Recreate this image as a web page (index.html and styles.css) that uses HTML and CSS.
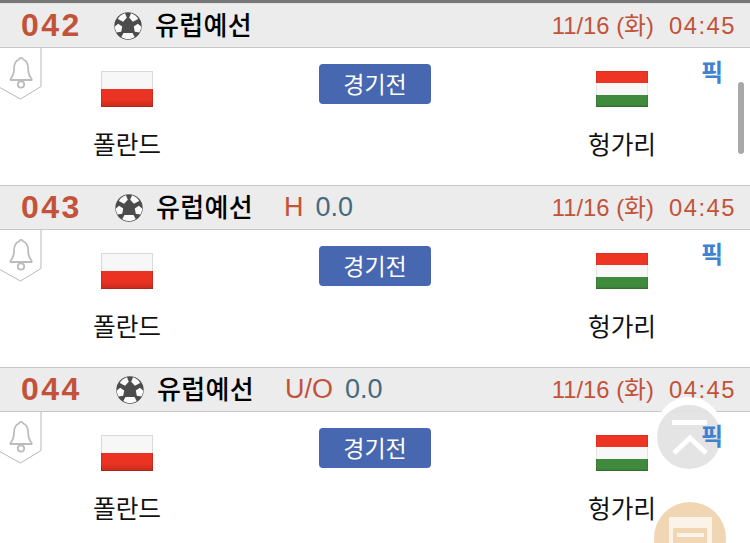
FILE: index.html
```html
<!DOCTYPE html>
<html lang="ko">
<head>
<meta charset="utf-8">
<title>경기 목록</title>
<link rel="stylesheet" href="styles.css">
</head>
<body>
<svg class="defs" width="0" height="0" aria-hidden="true">
  <defs>
    <linearGradient id="shade" x1="0" y1="0" x2="0" y2="1">
      <stop offset="0" stop-color="#000" stop-opacity="0"/>
      <stop offset=".8" stop-color="#000" stop-opacity="0"/>
      <stop offset="1" stop-color="#000" stop-opacity=".16"/>
    </linearGradient>
    <symbol id="ball" viewBox="0 0 28 28">
      <circle cx="14" cy="14" r="13.7" fill="#4c4c4c"/>
      <path d="M3.800 7C5.500 4 8.500 1.800 11 1.300l1.800 4.500-3.700 4z" fill="#fafafa"/>
      <path d="M24.200 7C22.500 4 19.500 1.800 17 1.300l-1.800 4.500 3.700 4z" fill="#fafafa"/>
      <path d="M.8 14.500c0 2.200.9 4.500 1.800 6l4.600-.7 1-5.300-4-2.800z" fill="#fafafa"/>
      <path d="M27.200 14.500c0 2.200-.9 4.500-1.800 6l-4.600-.7-1-5.300 4-2.800z" fill="#fafafa"/>
      <path d="M9.500 21h9l2.200 4c-2 1.400-4.200 2-6.700 2s-4.700-.6-6.700-2z" fill="#fafafa"/>
    </symbol>
    <symbol id="bell" viewBox="0 0 42 53">
      <path d="M-2 -2V38.500L20.500 51L41 38.500V-2" fill="#fff" stroke="#b8b8b8" stroke-width="1"/>
      <path d="M10.500 31c2.500-3 3.500-5.500 3.500-10 0-5 2-8.500 5-9.500a2.200 2.200 0 0 1 4.200 0c3 1 5 4.500 5 9.500 0 4.500 1 7 3.500 10v1H10.500z" fill="none" stroke="#bcbcbc" stroke-width="1.800" stroke-linejoin="round"/>
      <circle cx="21" cy="36.500" r="3.200" fill="none" stroke="#bcbcbc" stroke-width="1.800"/>
    </symbol>
    <symbol id="poland" viewBox="0 0 52 36" preserveAspectRatio="none">
      <rect width="52" height="18" fill="#f7f7f7"/>
      <rect y="18" width="52" height="18" fill="#ea3323"/>
      <rect width="52" height="36" fill="url(#shade)"/>
      <rect x=".5" y=".5" width="51" height="35" fill="none" stroke="#000" stroke-opacity=".12"/>
    </symbol>
    <symbol id="hungary" viewBox="0 0 52 36" preserveAspectRatio="none">
      <rect width="52" height="12" fill="#ee3524"/>
      <rect y="12" width="52" height="12" fill="#f8f8f8"/>
      <rect y="24" width="52" height="12" fill="#3f8a3c"/>
      <rect y="24" width="52" height="12" fill="url(#shade)"/>
      <rect x=".5" y=".5" width="51" height="35" fill="none" stroke="#000" stroke-opacity=".08"/>
    </symbol>
  </defs>
</svg>

<main class="list">
  <section class="match">
    <header class="head">
      <span class="num">042</span>
      <svg class="ball"><use href="#ball"/></svg>
      <span class="league">유럽예선</span>
      <span class="when"><span>11/16 (화)</span><span class="clock">04:45</span></span>
    </header>
    <div class="body">
      <svg class="bell"><use href="#bell"/></svg>
      <div class="team"><svg class="flag"><use href="#poland"/></svg><span class="name">폴란드</span></div>
      <div class="mid"><a class="btn">경기전</a></div>
      <div class="team"><svg class="flag"><use href="#hungary"/></svg><span class="name">헝가리</span></div>
      <span class="pick">픽</span>
    </div>
  </section>

  <section class="match">
    <header class="head">
      <span class="num n43">043</span>
      <svg class="ball"><use href="#ball"/></svg>
      <span class="league">유럽예선</span>
      <span class="odds"><span class="kind">H</span><span class="val">0.0</span></span>
      <span class="when"><span>11/16 (화)</span><span class="clock">04:45</span></span>
    </header>
    <div class="body">
      <svg class="bell"><use href="#bell"/></svg>
      <div class="team"><svg class="flag"><use href="#poland"/></svg><span class="name">폴란드</span></div>
      <div class="mid"><a class="btn">경기전</a></div>
      <div class="team"><svg class="flag"><use href="#hungary"/></svg><span class="name">헝가리</span></div>
      <span class="pick">픽</span>
    </div>
  </section>

  <section class="match">
    <header class="head">
      <span class="num n44">044</span>
      <svg class="ball"><use href="#ball"/></svg>
      <span class="league">유럽예선</span>
      <span class="odds"><span class="kind">U/O</span><span class="val">0.0</span></span>
      <span class="when"><span>11/16 (화)</span><span class="clock">04:45</span></span>
    </header>
    <div class="body">
      <svg class="bell"><use href="#bell"/></svg>
      <div class="team"><svg class="flag"><use href="#poland"/></svg><span class="name">폴란드</span></div>
      <div class="mid"><a class="btn">경기전</a></div>
      <div class="team"><svg class="flag"><use href="#hungary"/></svg><span class="name">헝가리</span></div>
      <span class="pick">픽</span>
    </div>
  </section>
</main>

<div class="scrollbar"></div>

<a class="fab fab-top">
  <svg viewBox="0 0 64 64" width="64" height="64"><path d="M15 17.500h35" stroke="#fff" stroke-width="5" fill="none"/><path d="M17 48l16-15 16 15" stroke="#fff" stroke-width="5" fill="none"/></svg>
</a>
<a class="fab fab-note">
  <svg viewBox="0 0 72 72" width="72" height="72"><path d="M15 15h43v45H15z" fill="#fbf3e8"/><path d="M19 26h34v34H19z" fill="#f0d6b3"/><path d="M23 33h27" stroke="#fbf3e8" stroke-width="4"/></svg>
</a>
</body>
</html>
```

FILE: styles.css
```css
* { box-sizing: border-box; }
html, body { margin: 0; height: 543px; overflow: hidden; background: #fff; }
body { font-family: "Liberation Sans", "Noto Sans CJK KR", sans-serif; position: relative; }
.defs { position: absolute; }
.list { border-top: 3px solid #777; }
.match { height: 182px; }
.head {
  height: 45px; display: flex; align-items: center; padding: 0 15px 0 21px;
  background: #ececec; border-top: 1px solid #c8c8c8; border-bottom: 1px solid #c8c8c8;
}
.match:first-child .head { border-top-color: #e0e0e0; }
.num { width: 93px; padding-bottom: 2px; font-size: 32px; font-weight: 700; letter-spacing: 2.5px; line-height: 38px; color: #c2533a; }
.n43 { width: 94px; }
.n44 { width: 95px; }
.ball { width: 28px; height: 28px; flex: none; }
.league { margin-left: 13px; font-size: 26px; font-weight: 500; letter-spacing: .3px; line-height: 38px; color: #000; }
.odds { margin-left: 31px; display: flex; align-items: baseline; gap: 12px; padding-bottom: 1px; font-size: 27px; line-height: 38px; }
.kind { color: #c2533a; }
.val { color: #466a7d; }
.when { margin-left: auto; display: flex; align-items: baseline; gap: 15px; font-size: 23.8px; line-height: 38px; color: #c2533a; }
.clock { letter-spacing: 1.5px; margin-right: -1px; }
.body {
  position: relative; height: 136px; padding: 16px 3px 0;
  display: grid; grid-template-columns: 248px 248px 246px;
}
.bell { position: absolute; left: 0; top: 0; width: 42px; height: 53px; }
.team { padding-top: 7px; display: flex; flex-direction: column; align-items: center; gap: 22px; }
.flag { width: 52px; height: 36px; display: block; }
.name { font-size: 24.7px; line-height: 34px; color: #111; }
.mid { display: flex; justify-content: center; align-items: flex-start; }
.btn {
  width: 112px; height: 40px; padding-bottom: 2px; display: flex; align-items: center; justify-content: center;
  background: #4767b0; border-radius: 4px; color: #fff; font-size: 23px;
}
.pick { position: absolute; right: 27px; top: 5px; z-index: 2; font-size: 24px; font-weight: 700; color: #3f82cf; }
.scrollbar { position: absolute; left: 738px; top: 82px; width: 6px; height: 72px; border-radius: 3px; background: #a8a8a8; }
.fab { position: absolute; z-index: 1; border-radius: 50%; display: block; }
.fab svg { display: block; }
.fab-top { left: 657px; top: 405px; width: 64px; height: 64px; background: rgba(226,226,226,.92); box-shadow: 0 -7px 0 1px #fff; }
.fab-note { left: 654px; top: 502px; width: 72px; height: 72px; background: #f0d6b3; }
```
